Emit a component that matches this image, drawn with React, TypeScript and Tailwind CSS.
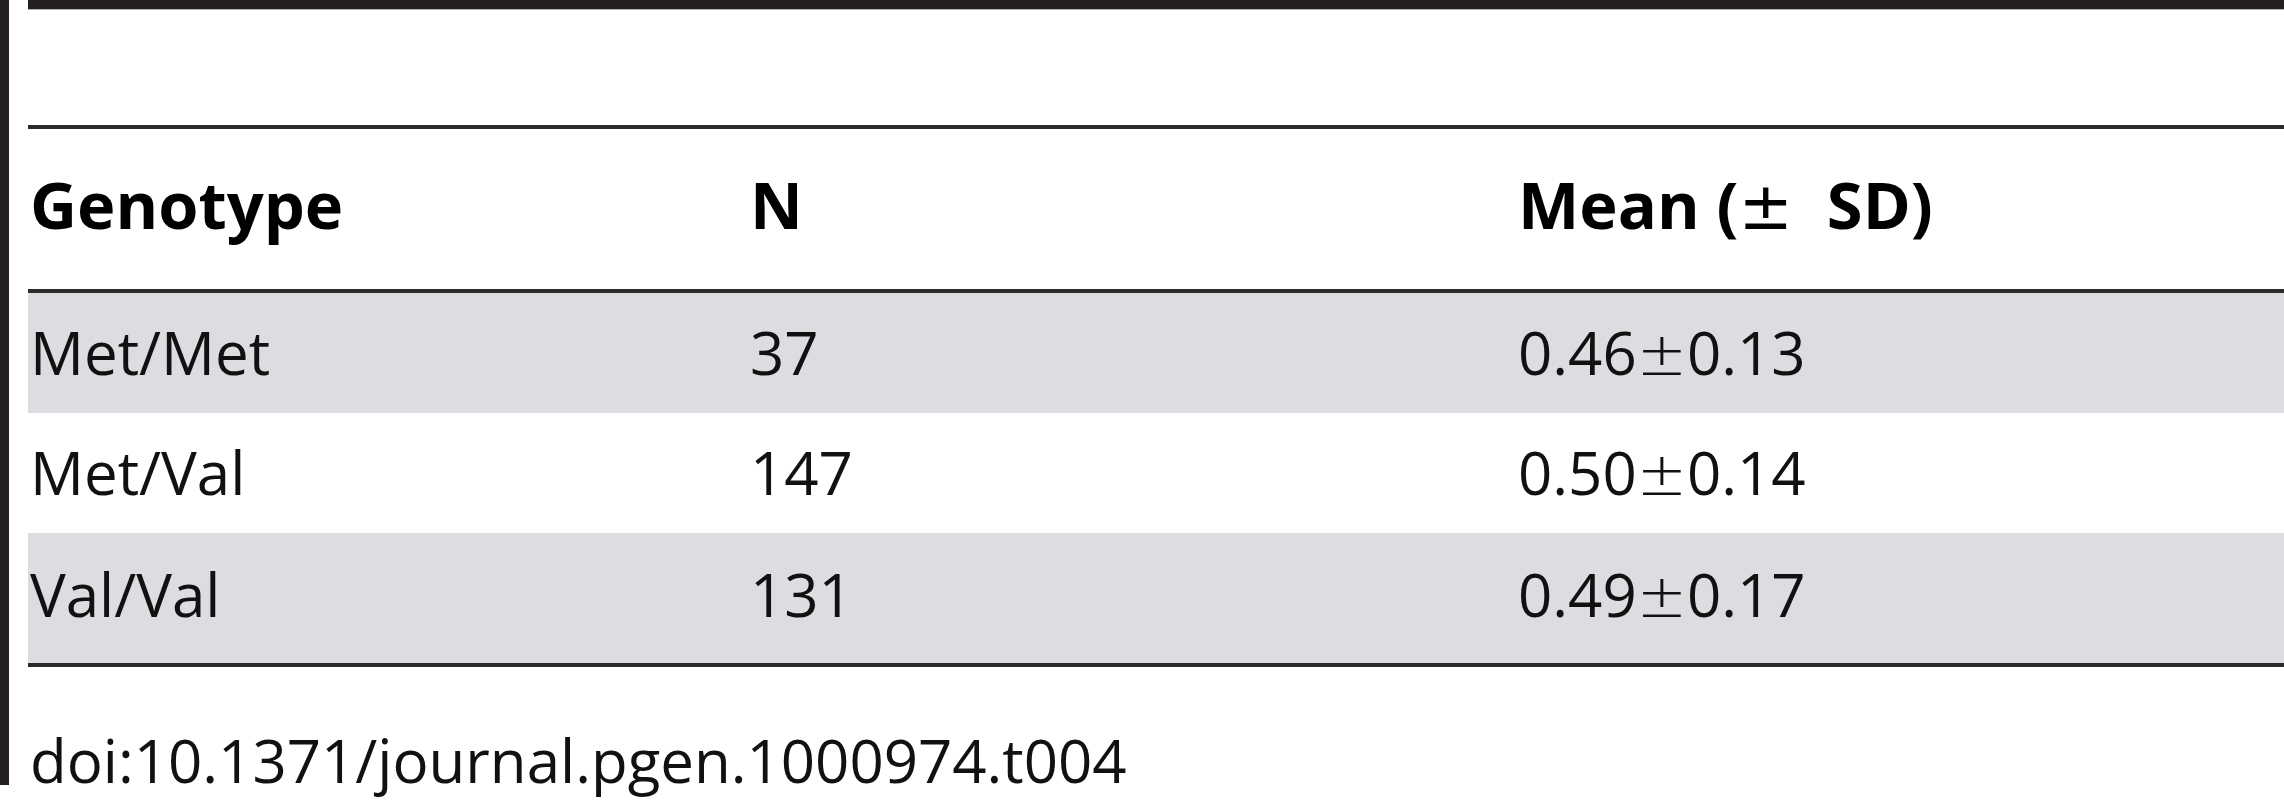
const rows = [
  { genotype: "Met/Met", n: "37", mean: "0.46", sd: "0.13", shaded: true, h: "h-[120px]", pt: "pt-[29px]" },
  { genotype: "Met/Val", n: "147", mean: "0.50", sd: "0.14", shaded: false, h: "h-[120px]", pt: "pt-[29px]" },
  { genotype: "Val/Val", n: "131", mean: "0.49", sd: "0.17", shaded: true, h: "h-[130px]", pt: "pt-[31px]" },
];

export default function App() {
  return (
    <div
      className="flex w-[2284px] h-[800px] bg-white text-[#111] overflow-hidden"
      style={{ fontFamily: '"Open Sans", "Noto Sans", sans-serif' }}
    >
      {/* left rule */}
      <div className="w-[9px] h-[785px] bg-[#231f20] shrink-0" />

      <div className="flex-1 ml-[19px] flex flex-col">
        {/* top heavy rule */}
        <div className="h-[10px] bg-[#231f20] border-b border-[#b5b5b5]" />
        <div className="h-[115px]" />

        <div className="border-t-4 border-[#2b2b2b]" />

        {/* header */}
        <div className="grid grid-cols-[720px_768px_1fr] h-[160px] pt-[43px] pl-[2px] text-[65px] leading-none font-bold text-black">
          <div>Genotype</div>
          <div>N</div>
          <div className="whitespace-pre">
            Mean (<span className="font-['DejaVu_Sans'] font-normal">±</span>{"  "}SD)
          </div>
        </div>

        <div className="border-t-4 border-[#2b2b2b]" />

        {/* body */}
        {rows.map((r) => (
          <div
            key={r.genotype}
            className={`grid grid-cols-[720px_768px_1fr] pl-[2px] text-[60px] leading-none ${r.h} ${r.pt} ${
              r.shaded ? "bg-[#dcdde0]" : "bg-white"
            }`}
          >
            <div>{r.genotype}</div>
            <div>{r.n}</div>
            <div>
              {r.mean}
              <span className="font-['DejaVu_Sans'] font-extralight">±</span>
              {r.sd}
            </div>
          </div>
        ))}

        <div className="border-t-4 border-[#2b2b2b]" />

        <div className="mt-[63px] pl-[2px] text-[60px] leading-none">doi:10.1371/journal.pgen.1000974.t004</div>
      </div>
    </div>
  );
}
